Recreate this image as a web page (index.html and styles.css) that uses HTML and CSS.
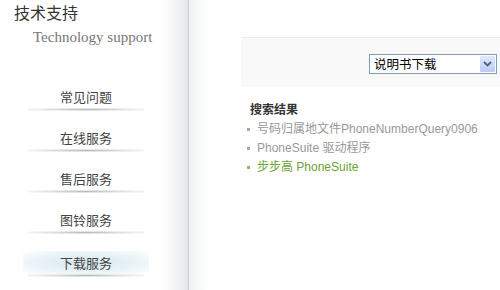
FILE: index.html
```html
<!DOCTYPE html>
<html lang="zh-CN">
<head>
    <meta charset="UTF-8">
    <title>技术支持</title>
    <link rel="stylesheet" href="styles.css">
</head>
<body>
    <div class="page">
        <aside class="sidebar">
            <div class="side-title">技术支持</div>
            <div class="side-sub">Technology support</div>
            <ul class="menu">
                <li><a href="#">常见问题</a></li>
                <li><a href="#">在线服务</a></li>
                <li><a href="#">售后服务</a></li>
                <li><a href="#">图铃服务</a></li>
                <li class="active"><a href="#">下载服务</a></li>
            </ul>
        </aside>
        <div class="divider"></div>
        <main class="content">
            <div class="search-bar">
                <div class="select">
                    <span class="select-text">说明书下载</span>
                    <span class="select-btn">
                        <svg width="9" height="6" viewBox="0 0 9 6"><path d="M1 1 L4.5 4.5 L8 1" fill="none" stroke="#4d6185" stroke-width="1.8"/></svg>
                    </span>
                </div>
            </div>
            <div class="results">
                <h3>搜索结果</h3>
                <ul>
                    <li>号码归属地文件PhoneNumberQuery0906</li>
                    <li>PhoneSuite 驱动程序</li>
                    <li class="hot">步步高 PhoneSuite</li>
                </ul>
            </div>
        </main>
    </div>
</body>
</html>
```

FILE: styles.css
```css
body {
    margin: 0;
    background: #fff;
    font-family: "Liberation Sans", "Noto Sans CJK SC", sans-serif;
    overflow: hidden;
}

.page {
    display: flex;
    height: 290px;
}

.sidebar {
    width: 188px;
    flex-shrink: 0;
    background: linear-gradient(90deg, #fff 0, #fff 162px, #eef1f2 180px, #e2e7e9 188px);
}

.side-title {
    font-family: "Noto Sans CJK SC", sans-serif;
    font-size: 16px;
    color: #333;
    line-height: 20px;
    padding: 2px 0 0 14px;
}

.side-sub {
    font-family: "Liberation Serif", serif;
    font-size: 15px;
    color: #777;
    padding: 7px 0 0 33px;
    line-height: 17px;
}

.menu {
    list-style: none;
    margin: 0;
    padding: 41px 16px 0 0;
}

.menu li {
    height: 41px;
    display: flex;
    justify-content: center;
}

.menu a {
    position: relative;
    display: block;
    width: 100px;
    text-align: center;
    font-family: "Noto Sans CJK SC", sans-serif;
    font-size: 13px;
    line-height: 19px;
    height: 21px;
    color: #444;
    text-decoration: none;
}

.menu a::after {
    content: "";
    position: absolute;
    left: -8px;
    right: -8px;
    bottom: -3px;
    height: 3px;
    background: radial-gradient(ellipse at center, rgba(110, 120, 125, 0.5) 0, rgba(160, 170, 175, 0.2) 60%, rgba(255, 255, 255, 0) 100%);
}

.menu .active a {
    background: radial-gradient(ellipse at center, rgba(200, 222, 232, 0.75) 0, rgba(215, 232, 240, 0.5) 60%, rgba(255, 255, 255, 0) 100%);
    width: 126px;
    height: 23px;
    line-height: 23px;
}

.menu .active a::after {
    left: 5px;
    right: 5px;
}

.divider {
    width: 1px;
    flex-shrink: 0;
    background: #c9cfd2;
    box-shadow: 1px 0 0 #e9edef, 2px 0 0 #f2f4f5;
}

.content {
    flex: 1;
    background: linear-gradient(90deg, #f0f2f3 0, #fff 20px);
}

.search-bar {
    margin: 37px 0 0 52px;
    height: 49px;
    border-top: 1px solid #ececec;
    background: #f9f9f9;
    display: flex;
    align-items: center;
    justify-content: flex-end;
    padding-right: 3px;
}

.select {
    display: flex;
    width: 126px;
    height: 18px;
    border: 1px solid #7f9db9;
    background: #fff;
    margin-top: 3px;
}

.select-text {
    flex: 1;
    font-family: "Noto Sans CJK SC", sans-serif;
    font-size: 12.5px;
    line-height: 18px;
    color: #000;
    padding-left: 4px;
}

.select-btn {
    width: 15px;
    margin: 1px;
    background: linear-gradient(#dfe8fb, #bccbf3);
    border-radius: 1px;
    display: flex;
    align-items: center;
    justify-content: center;
}

.results {
    padding: 13px 0 0 58px;
}

.results h3 {
    margin: 0 0 2px 3px;
    font-family: "Noto Sans CJK SC", sans-serif;
    font-size: 12px;
    font-weight: bold;
    color: #333;
    line-height: 18px;
}

.results ul {
    list-style: none;
    margin: 0;
    padding: 0;
}

.results li {
    font-size: 12px;
    line-height: 19px;
    color: #999;
    padding-left: 10px;
    position: relative;
}

.results li::before {
    content: "";
    position: absolute;
    left: 0;
    top: 8px;
    width: 3px;
    height: 3px;
    background: #aaa;
}

.results li.hot {
    color: #6aa336;
}

.results li.hot::before {
    background: #8bbb5c;
}
```
